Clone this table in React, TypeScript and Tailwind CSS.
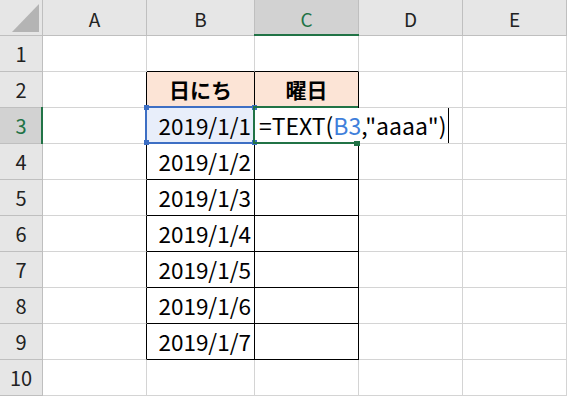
import React from "react";

const FONT = "font-['Noto_Sans_CJK_JP','Liberation_Sans',sans-serif]";

function Corner() {
  return (
    <div className="relative border-r border-b border-r-[#bfbfbf] border-b-[#bfbfbf] bg-[#e6e6e6]">
      <svg width="42" height="35" className="block">
        <polygon points="12,32 39,32 39,4" fill="#b4b4b4" />
      </svg>
    </div>
  );
}

function ColHead({ label, active }: { label: string; active?: boolean }) {
  return (
    <div
      className={
        "relative flex items-center justify-center border-r border-b border-r-[#bfbfbf] border-b-[#bfbfbf] text-[19px] leading-none pt-[2px] " +
        (active ? "bg-[#d2d2d2] text-[#217346]" : "bg-[#e6e6e6] text-[#222222]")
      }
    >
      {label}
      {active && (
        <div className="absolute left-[-1px] right-[-1px] bottom-[-1px] h-[2px] bg-[#217346]" />
      )}
    </div>
  );
}

function RowHead({ n, active }: { n: number; active?: boolean }) {
  return (
    <div
      className={
        "relative flex items-center justify-center border-r border-b border-r-[#bfbfbf] border-b-[#bfbfbf] text-[20px] leading-none " +
        (active ? "bg-[#d2d2d2] text-[#217346]" : "bg-[#e6e6e6] text-[#222222]")
      }
    >
      {n}
      {active && (
        <div className="absolute top-[-1px] bottom-[-1px] right-[-1px] w-[2px] bg-[#217346]" />
      )}
    </div>
  );
}

function Grid({ r, b }: { r?: boolean; b?: boolean }) {
  return (
    <div
      className={
        "border-r border-b " +
        (r ? "border-r-black " : "border-r-[#d4d4d4] ") +
        (b ? "border-b-black" : "border-b-[#d4d4d4]")
      }
    />
  );
}

function DateCell({ text }: { text: string }) {
  return (
    <div className="flex items-center justify-end border-r border-b border-r-black border-b-black pr-[3px] text-[22.5px] leading-none text-black">
      {text}
    </div>
  );
}

function Handle({ className }: { className: string }) {
  return <div className={"absolute w-[5px] h-[5px] bg-[#3d6fc4] " + className} />;
}

export default function App() {
  const dates = ["2019/1/2", "2019/1/3", "2019/1/4", "2019/1/5", "2019/1/6", "2019/1/7"];
  return (
    <div className={"w-[567px] h-[396px] overflow-hidden bg-white " + FONT}>
      <div className="grid grid-cols-[43px_104px_108px_104px_104px_104px] auto-rows-[36px]">
        {/* header row */}
        <Corner />
        <ColHead label="A" />
        <ColHead label="B" />
        <ColHead label="C" active />
        <ColHead label="D" />
        <ColHead label="E" />

        {/* row 1 */}
        <RowHead n={1} />
        <Grid />
        <Grid b />
        <Grid b />
        <Grid />
        <Grid />

        {/* row 2 */}
        <RowHead n={2} />
        <Grid r />
        <div className="flex items-center justify-center border-r border-b border-r-black border-b-black bg-[#fce4d6] text-[21px] font-bold leading-none text-black">
          日にち
        </div>
        <div className="flex items-center justify-center border-r border-b border-r-black border-b-black bg-[#fce4d6] text-[21px] font-bold leading-none text-black">
          曜日
        </div>
        <Grid />
        <Grid />

        {/* row 3 */}
        <RowHead n={3} active />
        <Grid r />
        <div className="relative flex items-center justify-end border-r border-b border-r-black border-b-black bg-[#e8eefa] pr-[3px] text-[22.5px] leading-none text-black">
          2019/1/1
          <div className="absolute left-[-2px] top-[-2px] right-[-1px] bottom-[-1px] border-2 border-[#3d6fc4]" />
          <Handle className="left-[-3px] top-[-3px]" />
          <Handle className="left-[105px] top-[-3px]" />
          <Handle className="left-[-3px] top-[32px]" />
          <Handle className="left-[105px] top-[32px]" />
        </div>
        <div className="relative z-10 flex items-center border-r border-b border-r-white border-b-white pl-[4px] text-[23px] leading-none text-black whitespace-nowrap">
          <span className="shrink-0">=TEXT(</span>
          <span className="shrink-0 text-[#3f7fdb]">B3</span>
          <span className="shrink-0">,"aaaa")</span>
          <span className="shrink-0 ml-[1px] block w-[1px] h-[35px] bg-black" />
          <div className="absolute left-[-2px] top-[-2px] w-[105px] h-[38px] border-l-2 border-t-2 border-b-2 border-[#217346]" />
          <div className="absolute left-[99px] top-[33px] w-[6px] h-[5px] bg-[#217346]" />
        </div>
        <Grid />
        <Grid />

        {/* rows 4-9 */}
        {dates.map((d, i) => (
          <React.Fragment key={d}>
            <RowHead n={i + 4} />
            <Grid r />
            <DateCell text={d} />
            <Grid r b />
            <Grid />
            <Grid />
          </React.Fragment>
        ))}

        {/* row 10 */}
        <RowHead n={10} />
        <Grid />
        <Grid />
        <Grid />
        <Grid />
        <Grid />
      </div>
    </div>
  );
}
